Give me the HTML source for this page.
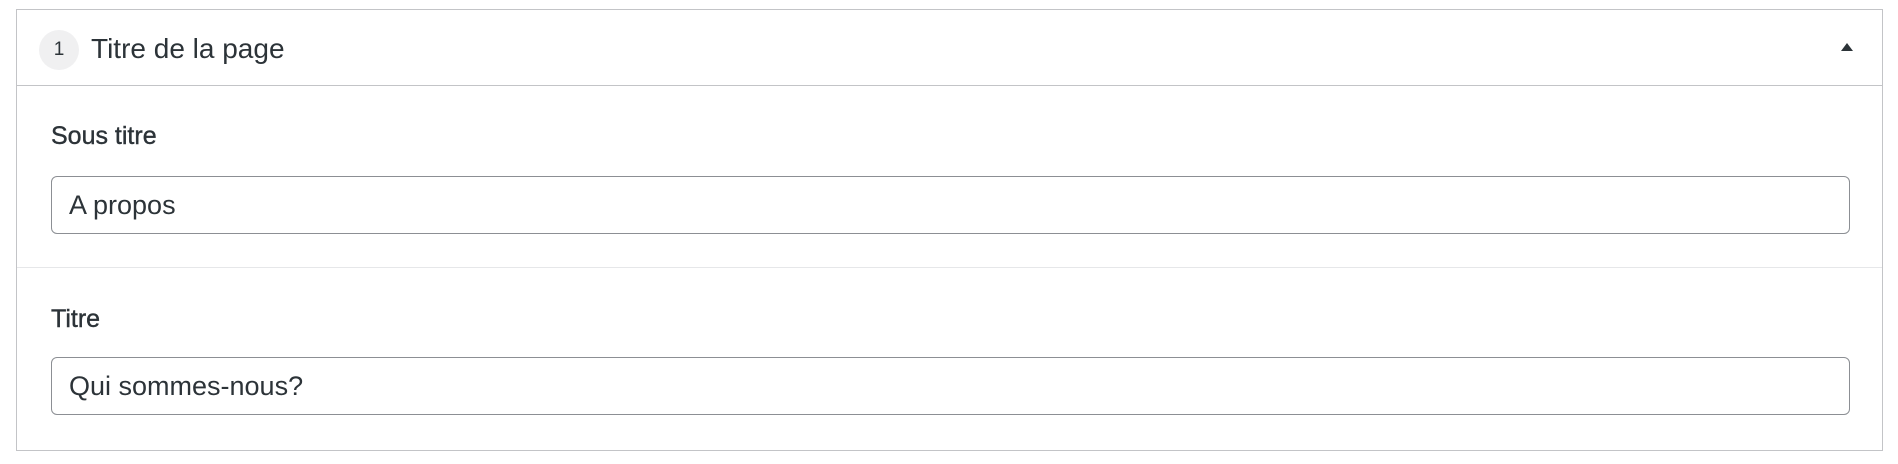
<!DOCTYPE html>
<html><head><style>
body{margin:0;background:#fff;font-family:"Liberation Sans",sans-serif;color:#1d2327;}
.box{position:absolute;left:16px;top:9px;width:1865px;height:440px;border:1px solid #c3c4c7;box-sizing:content-box;}
.hdr{position:absolute;left:0;top:0;width:100%;height:75px;border-bottom:1px solid #c3c4c7;}
.num{position:absolute;left:22px;top:20px;width:40px;height:40px;border-radius:50%;background:#f0f0f1;font-size:19px;line-height:40px;text-align:center;color:#2c3338;}
.ttl{position:absolute;left:74px;top:19px;font-size:28px;line-height:40px;color:#2c3338;}
.tri{position:absolute;left:1824px;top:33px;width:0;height:0;border-left:6px solid transparent;border-right:6px solid transparent;border-bottom:8px solid #2c3338;}
.sep{position:absolute;left:0;top:257px;width:100%;height:1px;background:#e6e7e9;}
.lbl{position:absolute;left:34px;font-size:25px;color:#2c3338;-webkit-text-stroke:0.4px #2c3338;}
.inp{position:absolute;left:34px;height:56px;border:1px solid #8c8f94;border-radius:6px;font-size:27px;line-height:56px;padding-left:17px;box-sizing:content-box;width:1780px;color:#2c3338;}
</style></head><body>
<div class="box">
<div class="hdr"><div class="num">1</div><div class="ttl">Titre de la page</div><div class="tri"></div></div>
<div class="lbl" style="top:112px">Sous titre</div>
<div class="inp" style="top:166px">A propos</div>
<div class="sep"></div>
<div class="lbl" style="top:295px">Titre</div>
<div class="inp" style="top:347px">Qui sommes-nous?</div>
</div>
</body></html>
